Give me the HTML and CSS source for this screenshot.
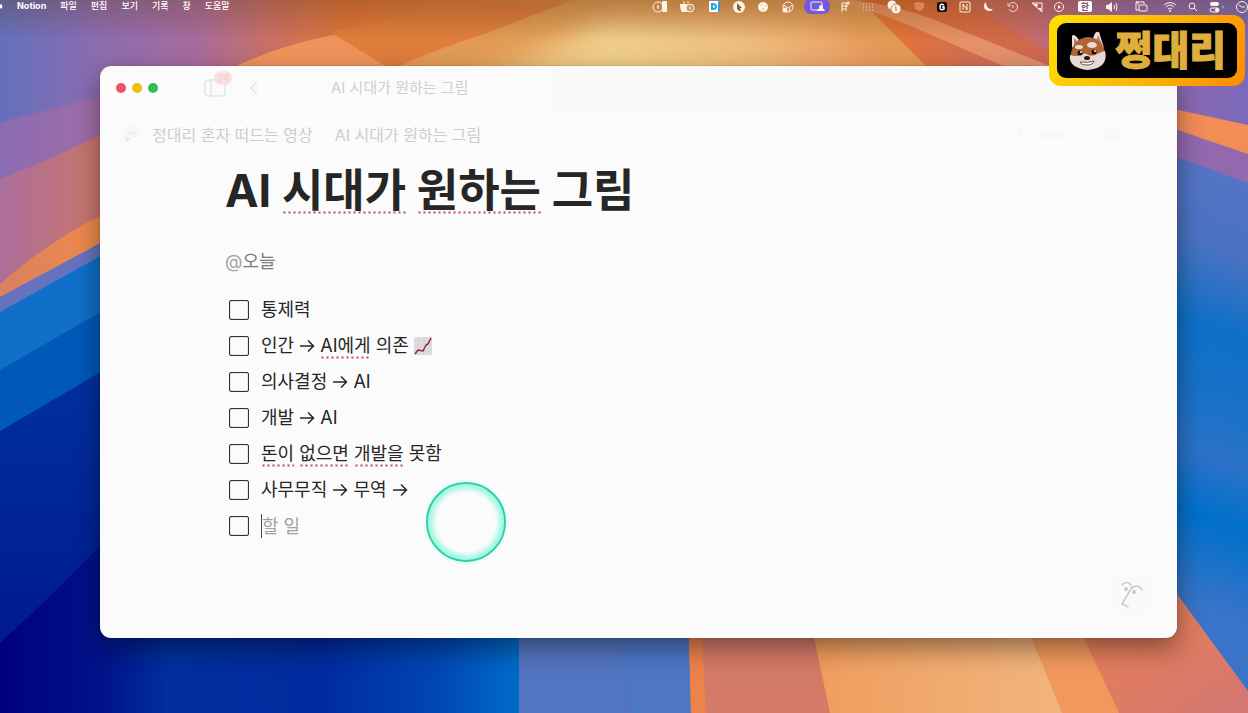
FILE: index.html
```html
<!DOCTYPE html>
<html lang="ko">
<head>
    <meta charset="UTF-8">
    <title>AI 시대가 원하는 그림</title>
    <link rel="stylesheet" href="styles.css">
</head>
<body>
    <!-- 배경화면 -->
    <svg class="wallpaper" viewBox="0 0 1248 713" preserveAspectRatio="none" aria-hidden="true">
        <defs>
            <linearGradient id="top" x1="0" x2="1" y1="0" y2="0">
                <stop offset="0" stop-color="#6370bd"/>
                <stop offset=".08" stop-color="#8d6cb0"/>
                <stop offset=".16" stop-color="#a96b9b"/>
                <stop offset=".22" stop-color="#cb7062"/>
                <stop offset=".28" stop-color="#df7436"/>
                <stop offset=".5" stop-color="#e08a49"/>
                <stop offset=".72" stop-color="#e27237"/>
                <stop offset=".82" stop-color="#c96b68"/>
                <stop offset=".9" stop-color="#9b69aa"/>
                <stop offset="1" stop-color="#7a69ba"/>
            </linearGradient>
            <linearGradient id="glow" x1="0" x2="1" y1="0" y2="0">
                <stop offset="0" stop-color="#e6a25e"/>
                <stop offset=".35" stop-color="#f0cf8b"/>
                <stop offset=".6" stop-color="#ecbd7c"/>
                <stop offset="1" stop-color="#e9844f"/>
            </linearGradient>
            <linearGradient id="dusk" x1="0" x2="1" y1="0" y2="0">
                <stop offset="0" stop-color="#8a6bb3"/>
                <stop offset="1" stop-color="#a26da5"/>
            </linearGradient>
            <linearGradient id="rose" x1="0" x2="1" y1="0" y2="0">
                <stop offset="0" stop-color="#ab6f9b"/>
                <stop offset="1" stop-color="#cb7668"/>
            </linearGradient>
            <linearGradient id="ember" x1="0" x2="1" y1="0" y2="0">
                <stop offset="0" stop-color="#d9805f"/>
                <stop offset="1" stop-color="#f08b49"/>
            </linearGradient>
            <linearGradient id="deep" x1="0" x2="1" y1="0" y2="0">
                <stop offset="0" stop-color="#00007c"/>
                <stop offset=".2" stop-color="#00138b"/>
                <stop offset=".32" stop-color="#002f9f"/>
                <stop offset=".62" stop-color="#002b9e"/>
                <stop offset=".85" stop-color="#0048b4"/>
                <stop offset="1" stop-color="#006cc8"/>
            </linearGradient>
            <linearGradient id="navy" x1="0" x2="0" y1="0" y2="1">
                <stop offset="0" stop-color="#00319f"/>
                <stop offset="1" stop-color="#001488"/>
            </linearGradient>
            <linearGradient id="sea" gradientUnits="userSpaceOnUse" x1="1200" y1="150" x2="1060" y2="560">
                <stop offset="0" stop-color="#5674c5"/>
                <stop offset=".2" stop-color="#4b72c2"/>
                <stop offset=".38" stop-color="#0d70c8"/>
                <stop offset=".55" stop-color="#1b71c8"/>
                <stop offset=".66" stop-color="#2c72c8"/>
                <stop offset=".8" stop-color="#0070cb"/>
                <stop offset="1" stop-color="#3a74c8"/>
            </linearGradient>
            <linearGradient id="peach" x1="0" x2="1" y1="0" y2="0">
                <stop offset="0" stop-color="#f19b5c"/>
                <stop offset=".25" stop-color="#f0a365"/>
                <stop offset="1" stop-color="#f2b57e"/>
            </linearGradient>
            <linearGradient id="coral" x1="0" x2="1" y1="0" y2="1">
                <stop offset="0" stop-color="#ee814b"/>
                <stop offset="1" stop-color="#d37774"/>
            </linearGradient>
            <linearGradient id="shade" x1="0" x2="0" y1="0" y2="1">
                <stop offset="0" stop-color="#5b3512" stop-opacity=".38"/>
                <stop offset="1" stop-color="#5b3512" stop-opacity="0"/>
            </linearGradient>
            <filter id="soft" x="-10%" y="-30%" width="120%" height="160%">
                <feGaussianBlur stdDeviation="12"/>
            </filter>
        </defs>
        <rect width="1248" height="713" fill="url(#top)"/>
        <path d="M228 70Q300 34 390 28T560 6L620 0H700L620 70Z" fill="#ee935b"/>
        <path d="M392 70Q430 50 510 26L580 4H470Q420 14 330 32Z" fill="#df7d3c"/>
        <path d="M392 70L572 0H860L930 70Z" fill="#e19b55"/>
        <path d="M420 100L600 20H820L960 100Z" fill="url(#glow)" filter="url(#soft)"/>
        <path d="M850 0H960L1080 70H1060L930 18Q890 4 850 0Z" fill="#d9682f" opacity=".5"/>
        <path d="M850 0Q890 4 930 18L1060 70H1012L920 30Q880 12 830 0Z" fill="#eda071" opacity=".7"/>
        <rect width="1248" height="40" fill="url(#shade)" opacity=".8"/>

        <path d="M0 122L100 97V200H0Z" fill="url(#dusk)"/>
        <path d="M0 179Q50 160 104 133V300H0Z" fill="url(#rose)"/>
        <path d="M0 284Q50 240 104 214V300H0Z" fill="url(#ember)"/>
        <path d="M0 297L104 241V400H0Z" fill="#6672bd"/>
        <path d="M0 312L104 254V400H0Z" fill="#106fc8"/>
        <path d="M0 370L104 310V440H0Z" fill="#0059b9"/>
        <path d="M0 431L104 370V713H0Z" fill="url(#navy)"/>
        <path d="M0 643Q54 594 104 542L520 620V713H0Z" fill="url(#deep)"/>

        <path d="M519 600H688L691 713H519Z" fill="#5374c1"/>
        <path d="M610 600H688L691 713H630Z" fill="#4d76c3"/>
        <path d="M688 600H806L830 713H691Z" fill="#d37a68"/>
        <path d="M688 600H700L706 713H691Z" fill="#ed824a"/>
        <path d="M806 600L830 713H1064L1016 600Z" fill="url(#peach)"/>
        <path d="M1016 600L1062 713H1122L1066 600Z" fill="#f1985c"/>
        <path d="M1066 600L1119 713H1248V690L1170 580Z" fill="url(#coral)"/>

        <path d="M1160 106L1248 125V300H1160Z" fill="#f18d55"/>
        <path d="M1160 124L1248 154V300H1160Z" fill="#9269af"/>
        <path d="M1160 151L1248 183V691L1174 590H1160Z" fill="url(#sea)"/>
    </svg>

    <header class="menubar">
        <nav class="menus">
            <svg class="apple" width="6" height="12" viewBox="6 0 6 12"><path d="M6 3q2-1 3 0 1 .5 1.600 1-1.500 2 .4 4-1 3-2.500 3-1.500-.6-2.500 0Z" fill="#fff"/></svg>
            <a href="#" class="app">Notion</a>
            <a href="#">파일</a>
            <a href="#">편집</a>
            <a href="#">보기</a>
            <a href="#">기록</a>
            <a href="#">창</a>
            <a href="#">도움말</a>
        </nav>
        <div class="tray">
            <svg width="26" height="14" viewBox="-13 -7 26 14"><circle cx="-2" r="5" class="line"/><path d="M-2-2V2M-3 0h2" class="line"/><rect x="2" y="-6" width="5" height="11" rx="1" class="fill"/></svg>
            <svg width="28" height="14" viewBox="-14 -7 28 14"><path d="M-7-3H3V5H-5q-2-2-2-8Z" class="fill"/><path d="M-3-6v3M1-6v2" class="line"/><circle cx="3" cy="1" r="4" fill="#c29b60" stroke="#fff2df"/><path d="M3-1v4" class="line"/></svg>
            <svg width="26" height="14" viewBox="-13 -7 26 14"><rect x="-5" y="-6" width="11" height="11" rx="1" fill="#fff"/><path d="M4-6h1q1 0 1 1v9q0 1-1 1H4Z" fill="#3298d2"/><path d="M-2-3v5h1q3 0 3-2.500T-1-3Z" fill="none" stroke="#28a3dd" stroke-width="2"/></svg>
            <svg width="24" height="14" viewBox="-12 -7 24 14"><circle r="6" class="fill"/><path d="M-2-4L3 1H1L2 4 0 4-1 2-2 3Z" fill="#80633d"/></svg>
            <svg width="24" height="14" viewBox="-12 -7 24 14"><circle r="5" class="fill"/><path d="M-2-2h1M2-1h1M-1 2h2" stroke="#d7a97c"/></svg>
            <svg width="26" height="14" viewBox="-13 -7 26 14"><circle r="5" class="line"/><path d="M-4-2Q1 3 4-2M1 1L2 4" class="line"/><circle cx="-3" cy="3" r="2.500" class="fill"/></svg>
            <svg width="32" height="14" viewBox="-16 -7 32 14"><rect x="-13" y="-8" width="26" height="15" rx="7" fill="#7259e2"/><rect x="-6" y="-5" width="11" height="8" rx="1" class="line"/><circle cx="4" cy="0" r="2" class="fill"/><path d="M0 4q1-3 4-3t4 3Z" class="fill"/></svg>
            <svg width="24" height="14" viewBox="-12 -7 24 14"><path d="M-3-4H1V4M-3-4V5M-3-1H3M-3 2H1" class="line"/><circle cx="3" cy="-4" r="1.500" class="fill"/></svg>
            <svg width="22" height="14" viewBox="-11 -7 22 14"><path d="M-5-3H5M-5 0H5M-5 3H5" class="line" stroke-dasharray="1 2" opacity=".7"/></svg>
            <svg width="30" height="14" viewBox="-15 -7 30 14"><circle cx="-2" cy="-2" r="4.500" class="fill"/><circle cx="2" cy="2" r="5" class="fill" stroke="#c9824e"/><path d="M1 0h1v4" stroke="#a86a43" fill="none"/></svg>
            <svg width="20" height="14" viewBox="-10 -7 20 14"><path d="M-5-4L-1-5 5-4 5 1 1 4-4 2Z" fill="#e5805b"/></svg>
            <svg width="26" height="14" viewBox="-13 -7 26 14"><rect x="-5" y="-5" width="10" height="10" rx="2" fill="#100d0e"/><path d="M2-2Q-2-4-2 0T2 2V0H0" fill="none" stroke="#fff" stroke-width="1.500"/></svg>
            <svg width="20" height="14" viewBox="-10 -7 20 14"><rect x="-5" y="-5" width="10" height="10" rx="1" class="line"/><path d="M-2 3V-3L2 3V-3" class="line"/></svg>
            <svg width="26" height="14" viewBox="-13 -7 26 14"><path d="M-2-5A5 5 0 1 0 5 2Q-2 3-2-5Z" class="fill"/></svg>
            <svg width="24" height="14" viewBox="-12 -7 24 14"><path d="M-4-2A4.500 4.500 0 1 1-4 2M-5-4v3h3M0-2v3" class="line" opacity=".8"/></svg>
            <svg width="24" height="14" viewBox="-12 -7 24 14"><path d="M-5-4H5V5Z" class="line"/><path d="M-4-3L0 0 1-3ZM1 1l3 3V1Z" class="fill"/></svg>
            <svg width="20" height="14" viewBox="-10 -7 20 14"><circle r="4.500" class="line"/><path d="M-1-2L2 0-1 2Z" class="fill"/></svg>
            <span class="input-source">한</span>
            <svg width="22" height="14" viewBox="-11 -7 22 14"><path d="M-6-2h2l4-3V5L-4 2h-2Z" class="fill"/><path d="M2-2q1 2 0 4M4-4q2 4 0 8" class="line"/></svg>
            <svg width="36" height="14" viewBox="-18 -7 36 14"><path d="M-3-2V-5H-5V3h3" class="line"/><path d="M-5-5H3v2" class="line"/><rect x="-2" y="-2" width="8" height="6" rx="1" class="line"/></svg>
            <svg width="22" height="14" viewBox="-11 -7 22 14"><path d="M-6-2Q0-7 6-2M-4 0Q0-4 4 0M-2 2Q0 0 2 2" class="line"/><circle cy="4" r="1" class="fill"/></svg>
            <svg width="24" height="14" viewBox="-12 -7 24 14"><circle cx="-1" cy="-1" r="3" class="line"/><path d="M1 1L4 4" class="line"/></svg>
            <svg width="20" height="14" viewBox="-10 -7 20 14"><rect x="-5" y="-5" width="9" height="4" rx="2" class="fill"/><rect x="-5" y="1" width="9" height="4" rx="2" class="line"/><circle cx="2" cy="3" r="2" class="fill"/><circle cx="8" r="1.500" fill="#4fb886"/></svg>
            <svg class="clock" width="12" height="14" viewBox="-6 -7 12 14"><circle r="5.500" class="line"/><path d="M-3-2L0 0H3" class="line"/></svg>
        </div>
    </header>

    <main class="window">
        <div class="tabbar">
            <div class="lights">
                <button class="close" aria-label="닫기"></button>
                <button class="minimize" aria-label="최소화"></button>
                <button class="zoom" aria-label="확대"></button>
            </div>
            <button class="sidebar-toggle" aria-label="사이드바">
                <svg width="22" height="18" viewBox="0 0 22 18" fill="none" stroke="#e6e5e5" stroke-width="1.500"><rect x="1" y="1" width="20" height="16" rx="3"/><path d="M7 1V17"/></svg>
                <span class="count">24</span>
            </button>
            <button class="back" aria-label="뒤로">
                <svg width="8" height="14" viewBox="0 0 8 14" fill="none" stroke="#e4e3e3" stroke-width="1.500"><path d="M7 1L1 7L7 13"/></svg>
            </button>
            <div class="tab">AI 시대가 원하는 그림</div>
            <div class="tab-rest"></div>
        </div>

        <div class="breadcrumb">
            <svg width="20" height="20" viewBox="0 0 20 20"><path d="M2 2H18V14H7L3 18V14H2Z" fill="#f7f7f7"/><path d="M7 9H14" stroke="#d0d0d0" stroke-width="1" stroke-dasharray="1 2"/><path d="M3 14H9L4 18Z" fill="#e6e6e6"/></svg>
            <a href="#">정대리 혼자 떠드는 영상</a>
            <a href="#">AI 시대가 원하는 그림</a>
            <svg class="tools" width="104" height="16" viewBox="0 0 104 16" fill="#f8f8f8"><rect y="2" width="4" height="12"/><rect x="20" y="4" width="26" height="8" rx="3"/><rect x="84" y="1" width="16" height="14" rx="4"/></svg>
        </div>

        <article class="page">
            <h1>AI <span class="typo">시대가</span> <span class="typo">원하는</span> 그림</h1>
            <p class="mention"><span>@</span>오늘</p>
            <ul class="todos">
                <li><input type="checkbox" id="todo-1"><label for="todo-1">통제력</label></li>
                <li><input type="checkbox" id="todo-2"><label for="todo-2">인간 <svg class="arrow" viewBox="0 0 32 28"><path d="M2 14H29M18 3L29 14L18 25"/></svg> <span class="typo">AI에게</span> 의존 <svg class="chart" viewBox="0 0 18 18"><rect width="18" height="18" rx="1" fill="#dcdde0"/><path d="M0 4H18M0 9H18M0 14H18M5 0V18M10 0V18M15 0V18" stroke="#d3d4d8" stroke-width="1"/><path d="M1 17L4 13L9 14L12 8L14 7L17 1" fill="none" stroke="#96223f" stroke-width="1.500"/></svg></label></li>
                <li><input type="checkbox" id="todo-3"><label for="todo-3">의사결정 <svg class="arrow" viewBox="0 0 32 28"><path d="M2 14H29M18 3L29 14L18 25"/></svg> AI</label></li>
                <li><input type="checkbox" id="todo-4"><label for="todo-4">개발 <svg class="arrow" viewBox="0 0 32 28"><path d="M2 14H29M18 3L29 14L18 25"/></svg> AI</label></li>
                <li><input type="checkbox" id="todo-5"><label for="todo-5"><span class="typo">돈이</span> <span class="typo">없으면</span> <span class="typo">개발을</span> 못함</label></li>
                <li><input type="checkbox" id="todo-6"><label for="todo-6">사무무직 <svg class="arrow" viewBox="0 0 32 28"><path d="M2 14H29M18 3L29 14L18 25"/></svg> 무역 <svg class="arrow" viewBox="0 0 32 28"><path d="M2 14H29M18 3L29 14L18 25"/></svg></label></li>
                <li><input type="checkbox" id="todo-7" aria-label="완료"><input type="text" class="new-todo" placeholder="할 일" aria-label="할 일"></li>
            </ul>
        </article>

        <span class="click-ring"></span>
        <button class="assistant" aria-label="AI">
            <svg width="24" height="28" viewBox="0 0 24 28" fill="none" stroke="#c9c9c9" stroke-width="1.500" stroke-linecap="round"><path d="M2 4Q7-1 11 4M12 7Q18 2 22 9M12 6L2 23Q5 24 8 26"/><circle cx="6" cy="8" r="2" fill="#c9c9c9" stroke="none"/><circle cx="14" cy="11" r="2" fill="#c9c9c9" stroke="none"/></svg>
        </button>
    </main>

    <!-- 채널 로고 -->
    <div class="channel">
        <div class="channel-inner">
            <svg width="40" height="40" viewBox="0 0 40 40">
                <path d="M4 17L4 5Q6 2 11 9ZM36 17L31 1Q27-1 25 8Z" fill="#ede0db"/>
                <path d="M6 14L6 7L10 11ZM34 13L30 4L28 10Z" fill="#b9837a"/>
                <path d="M20 6Q34 7 37 21Q40 37 20 38Q0 37 3 22Q6 7 20 6Z" fill="#ae6434"/>
                <path d="M2 24Q8 26 13 24Q17 21 20 24Q25 26 31 22L37 20Q41 37 20 39Q0 37 2 24Z" fill="#e6d8d5"/>
                <ellipse cx="11" cy="16" rx="4" ry="2" fill="#eadbd4"/>
                <ellipse cx="24" cy="14" rx="5" ry="3" fill="#eadbd4"/>
                <circle cx="12" cy="22" r="2.500" fill="#19110e"/>
                <circle cx="26" cy="21" r="2.500" fill="#19110e"/>
                <circle cx="13" cy="21" r="1" fill="#fff"/>
                <circle cx="27" cy="20" r="1" fill="#fff"/>
                <ellipse cx="19" cy="27" rx="3" ry="2" fill="#241713"/>
                <path d="M12 31Q20 32 26 30Q25 34 19 34Q13 34 12 31Z" fill="#fff" stroke="#744d43"/>
            </svg>
            <strong>쩡대리</strong>
        </div>
    </div>
</body>
</html>
```
FILE: styles.css
```css
* {
    box-sizing: border-box;
}
body {
    margin: 0;
    min-height: 100vh;
    display: flex;
    flex-direction: column;
    overflow: hidden;
    background-color: #00138b;
    font-family: Inter, "Noto Sans CJK KR", sans-serif;
    color: #262626;
}
button {
    padding: 0;
    border: 0;
    background: none;
    font: inherit;
}
a {
    color: inherit;
    text-decoration: none;
}
.wallpaper {
    position: absolute;
    z-index: -1;
    width: 100%;
    height: 100%;
}

/* 메뉴 막대 */
.menubar {
    display: flex;
    justify-content: space-between;
    height: 14px;
    color: #fff;
    font-size: 9px;
    font-weight: 500;
    line-height: 12px;
}
.menus {
    display: flex;
    gap: 14px;
}
.apple {
    width: 3px;
}
.app {
    font-weight: 700;
}
.tray {
    display: flex;
}
.tray svg {
    overflow: visible;
}
.tray .line {
    fill: none;
    stroke: #fff2e6;
    stroke-width: 1;
}
.tray .fill {
    fill: #fff2e6;
}
.input-source {
    width: 14px;
    height: 11px;
    margin: 1px 9px;
    border-radius: 2px;
    background-color: #fff;
    color: #7d4c69;
    font-weight: 700;
    line-height: 11px;
    text-align: center;
}
.clock {
    margin-left: 11px;
}

/* 창 */
.window {
    position: relative;
    flex: 1;
    display: flex;
    flex-direction: column;
    margin: 52px 71px 75px 100px;
    border-radius: 11px;
    background-color: #fbfbfb;
    box-shadow: 0 0 1px rgba(0, 0, 0, 0.6), 0 10px 26px rgba(0, 0, 0, 0.42);
}
.tabbar {
    display: flex;
    align-items: center;
    height: 44px;
    padding-left: 16px;
}
.lights {
    display: flex;
    gap: 6px;
    margin-right: 46px;
}
.lights button {
    width: 10px;
    height: 10px;
    border-radius: 50%;
}
.lights .close {
    background-color: #ec5363;
}
.lights .minimize {
    background-color: #eebf0c;
}
.lights .zoom {
    background-color: #32bd5a;
}
.sidebar-toggle {
    position: relative;
    display: flex;
    margin-right: 24px;
}
.count {
    position: absolute;
    top: -8px;
    left: 10px;
    width: 18px;
    height: 14px;
    border-radius: 7px;
    background-color: #f8e3e3;
    color: #f1cccd;
    font-size: 10px;
    line-height: 14px;
}
.back {
    display: flex;
}
.tab {
    width: 220px;
    margin-left: 73px;
    padding-bottom: 3px;
    color: #cfcfcf;
    font-size: 15px;
}
.tab-rest {
    flex: 1;
    align-self: stretch;
    border-top-right-radius: 11px;
    background-color: #f9f9f9;
}
.breadcrumb {
    display: flex;
    align-items: center;
    height: 48px;
    padding: 0 54px 0 22px;
    color: #cdcdcd;
    font-size: 16px;
}
.breadcrumb a {
    margin-left: 10px;
}
.breadcrumb a + a {
    margin-left: 22px;
}
.tools {
    margin-left: auto;
}

/* 본문 */
.page {
    padding: 3px 125px 0;
    font-size: 18px;
}
h1 {
    margin: 0;
    font-size: 45px;
    font-weight: 700;
    line-height: 60px;
}
.typo {
    display: inline-block;
    background: radial-gradient(circle, #bf4f66 0, transparent 2px) 0 100% / 5px 3px repeat-x;
}
h1 .typo {
    line-height: 46px;
}
.mention {
    margin: 23px 0 12px;
    color: #7c7c7c;
    line-height: 36px;
}
.mention span {
    color: #a3a3a3;
}
.todos {
    margin: 0;
    padding: 0 0 0 4px;
    list-style: none;
}
.todos li {
    display: flex;
    align-items: center;
    gap: 12px;
    height: 36px;
}
.todos input[type="checkbox"] {
    appearance: none;
    width: 20px;
    height: 20px;
    margin: 0;
    border: 1px solid #333;
    border-radius: 2px;
    box-shadow: inset 0 0 1px #333;
}
.todos label {
    line-height: 26px;
}
.arrow {
    width: 16px;
    height: 14px;
    vertical-align: -1px;
    fill: none;
    stroke: #262626;
    stroke-width: 3;
}
.chart {
    width: 18px;
    height: 18px;
    vertical-align: -3px;
}
.new-todo {
    flex: 1;
    height: 24px;
    padding: 0;
    border: 0;
    border-left: 1px solid #444;
    background: none;
    font: inherit;
    outline: none;
}
.new-todo::placeholder {
    color: #a0a0a0;
}

/* 클릭 표시 */
.click-ring {
    position: absolute;
    top: 416px;
    left: 326px;
    width: 80px;
    height: 80px;
    border: 2px solid #25d3a8;
    border-radius: 50%;
    box-shadow: inset 0 0 4px 5px #a4f7e2, 0 0 4px #c9f7eb;
}
.assistant {
    position: absolute;
    right: 20px;
    bottom: 18px;
    display: flex;
    align-items: center;
    justify-content: center;
    width: 50px;
    height: 50px;
    border-radius: 50%;
    background-color: #fafafa;
}

/* 채널 로고 */
.channel {
    position: absolute;
    top: 15px;
    right: 3px;
    padding: 8px;
    border-radius: 12px;
    background: linear-gradient(120deg, #ffe000, #fcb80a 50%, #ff8a00);
}
.channel-inner {
    display: flex;
    align-items: center;
    gap: 8px;
    height: 55px;
    padding: 0 11px;
    border-radius: 9px;
    background-color: #000;
}
.channel strong {
    color: #dfae3d;
    font-size: 40px;
    font-weight: 900;
    line-height: 55px;
    -webkit-text-stroke: 1px #dfae3d;
}
```
